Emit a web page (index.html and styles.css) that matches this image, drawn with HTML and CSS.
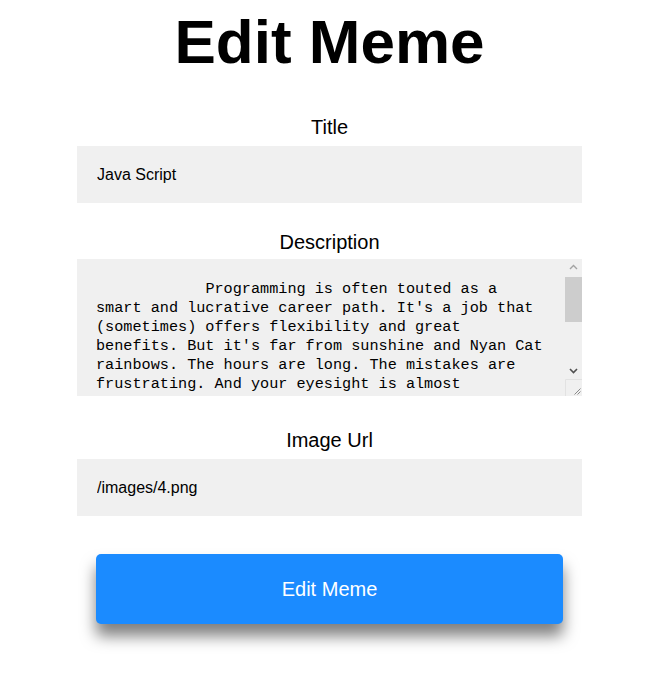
FILE: index.html
```html
<!DOCTYPE html>
<html lang="en">
<head>
<meta charset="utf-8">
<title>Edit Meme</title>
<link rel="stylesheet" href="styles.css">
</head>
<body>
<main class="page">
  <h1 class="page-title">Edit Meme</h1>
  <form class="meme-form">
    <div class="field">
      <label class="field-label" for="title">Title</label>
      <input class="field-input" id="title" type="text" value="Java Script">
    </div>
    <div class="field field--area">
      <label class="field-label" for="description">Description</label>
      <div class="textarea-wrap">
        <textarea class="field-textarea" id="description">            Programming is often touted as a smart and lucrative career path. It's a job that (sometimes) offers flexibility and great benefits. But it's far from sunshine and Nyan Cat rainbows. The hours are long. The mistakes are frustrating. And your eyesight is almost guaranteed to suffer. And you never seem to have enough time. Still, millions of developers keep coming back every single day, because there's nothing quite like the feeling of finally fixing that one stubborn bug at two in the morning.</textarea>
        <div class="fake-scrollbar" aria-hidden="true">
          <div class="sb-button">
            <svg width="17" height="17" viewBox="0 0 17 17"><path d="M5 10 L8.5 6.5 L12 10" fill="none" stroke="#a3a3a3" stroke-width="1.4"/></svg>
          </div>
          <div class="sb-track"><div class="sb-thumb"></div></div>
          <div class="sb-button">
            <svg width="17" height="17" viewBox="0 0 17 17"><path d="M5 7 L8.5 10.5 L12 7" fill="none" stroke="#505050" stroke-width="1.6"/></svg>
          </div>
          <div class="sb-corner">
            <svg width="17" height="17" viewBox="0 0 17 17"><path d="M0.5 17 V0.5 H17" fill="none" stroke="#e2e2e2"/><path d="M15.5 9.5 L9.5 15.5 M15.5 12.5 L12.5 15.5" stroke="#8a8a8a" stroke-width="1"/></svg>
          </div>
        </div>
      </div>
    </div>
    <div class="field">
      <label class="field-label" for="image">Image Url</label>
      <input class="field-input" id="image" type="text" value="/images/4.png">
    </div>
    <button class="submit-btn" type="button">Edit Meme</button>
  </form>
</main>
</body>
</html>
```
FILE: styles.css
```css
html, body {
  margin: 0;
  padding: 0;
  background: #ffffff;
}

body {
  font-family: "Liberation Sans", Arial, sans-serif;
  color: #000000;
}

.page {
  width: 659px;
  padding-top: 5px;
  padding-bottom: 40px;
}

.page-title {
  margin: 0;
  font-size: 62px;
  line-height: 74px;
  font-weight: bold;
  text-align: center;
}

.meme-form {
  width: 505px;
  margin: 37px auto 0;
  display: flex;
  flex-direction: column;
}

.field {
  display: flex;
  flex-direction: column;
  margin-bottom: 28px;
}

.field--area {
  margin-bottom: 33px;
}

.field-label {
  font-size: 20px;
  line-height: 23px;
  text-align: center;
  margin-bottom: 7px;
}

.field--area .field-label {
  margin-bottom: 5px;
}

.field-input {
  box-sizing: border-box;
  height: 57px;
  width: 100%;
  margin: 0;
  padding: 0 20px;
  border: none;
  outline: none;
  background: #f0f0f0;
  font-family: "Liberation Sans", Arial, sans-serif;
  font-size: 16px;
  color: #000000;
}

.textarea-wrap {
  position: relative;
  height: 137px;
}

.field-textarea {
  box-sizing: border-box;
  display: block;
  width: 100%;
  height: 137px;
  margin: 0;
  padding: 21px 37px 20px 19px;
  border: none;
  outline: none;
  background: #f0f0f0;
  font-family: "Liberation Mono", "DejaVu Sans Mono", monospace;
  font-size: 15.2px;
  line-height: 19px;
  color: #000000;
  resize: none;
  overflow: hidden;
}

.fake-scrollbar {
  position: absolute;
  top: 0;
  right: 0;
  bottom: 0;
  width: 17px;
  display: flex;
  flex-direction: column;
  background: #f0f0f0;
}

.sb-button,
.sb-corner {
  height: 17px;
  flex: none;
}

.sb-button svg,
.sb-corner svg {
  display: block;
}

.sb-track {
  flex: 1;
  padding-top: 1px;
}

.sb-thumb {
  height: 45px;
  background: #cdcdcd;
}

.submit-btn {
  align-self: center;
  width: 467px;
  height: 70px;
  margin: 10px 0 0;
  border: none;
  border-radius: 5px;
  background: #1b8bff;
  color: #ffffff;
  font-family: "Liberation Sans", Arial, sans-serif;
  font-size: 20px;
  box-shadow: 0 12px 15px rgba(0, 0, 0, 0.5);
  cursor: pointer;
}
```
